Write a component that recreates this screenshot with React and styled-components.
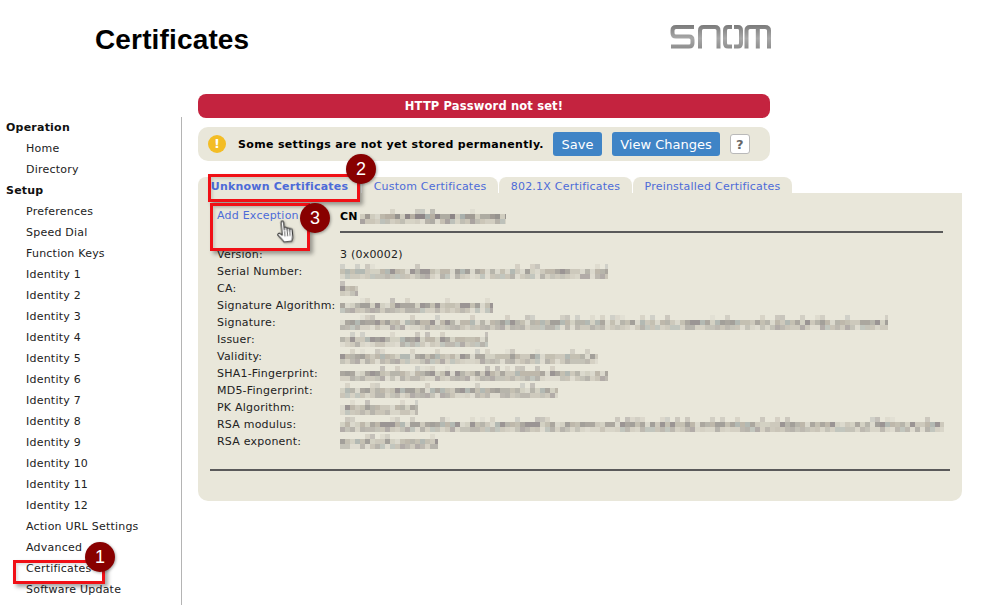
import { createGlobalStyle, styled } from "styled-components";

const GlobalStyle = createGlobalStyle`
  html, body {
    margin: 0;
    padding: 0;
    background: #fff;
  }
  body {
    font-family: "DejaVu Sans", Verdana, sans-serif;
    font-size: 11px;
    letter-spacing: 0.22px;
    color: #222;
  }
`;

const setupItems = [
  "Preferences",
  "Speed Dial",
  "Function Keys",
  "Identity 1",
  "Identity 2",
  "Identity 3",
  "Identity 4",
  "Identity 5",
  "Identity 6",
  "Identity 7",
  "Identity 8",
  "Identity 9",
  "Identity 10",
  "Identity 11",
  "Identity 12",
  "Action URL Settings",
  "Advanced",
  "Certificates",
  "Software Update",
];

const tabs = [
  { label: "Unknown Certificates", width: 163, active: true },
  { label: "Custom Certificates", width: 137 },
  { label: "802.1X Certificates", width: 134 },
  { label: "Preinstalled Certificates", width: 160 },
];

const certRows = [
  { label: "Version:", text: "3 (0x0002)" },
  { label: "Serial Number:", blur: 268 },
  { label: "CA:", blur: 18 },
  { label: "Signature Algorithm:", blur: 153 },
  { label: "Signature:", blur: 548 },
  { label: "Issuer:", blur: 148 },
  { label: "Validity:", blur: 258 },
  { label: "SHA1-Fingerprint:", blur: 268 },
  { label: "MD5-Fingerprint:", blur: 218 },
  { label: "PK Algorithm:", blur: 78 },
  { label: "RSA modulus:", blur: 604 },
  { label: "RSA exponent:", blur: 98 },
];

const blurColors = ["#bdb8aa", "#aeaca2", "#cfccbe", "#96938e", "#b6afa2", "#a9b0ac", "#c8c3b6", "#a09b94", "#d8d6ca", "#8d8687"];

// pixelated stand-in for the redacted values
const Mosaic = ({ width, seed = 7, dark = false }) => {
  let n = seed * 7919 + width;
  const next = () => {
    n = (n * 1103515245 + 12345) & 0x7fffffff;
    return (n >> 8) / 0x7fffff;
  };
  const cells = [];
  const cols = Math.ceil(width / 5);
  const rowOpacity = dark ? [0.5, 1, 0.7] : [0.4, 0.85, 0.6];
  for (let c = 0; c < cols; c++) {
    for (let r = 0; r < 3; r++) {
      if (r === 0 && next() > 0.22) continue;
      const color = blurColors[Math.floor(next() * blurColors.length) % blurColors.length];
      const w = c === cols - 1 ? width - c * 5 : 5;
      cells.push(<rect key={`${c}-${r}`} x={c * 5} y={r * 5} width={w} height={5} fill={color} opacity={rowOpacity[r]} />);
    }
  }
  return (
    <MosaicSvg width={width} height={15} viewBox={`0 0 ${width} 15`}>
      {cells}
    </MosaicSvg>
  );
};

const SnomLogo = () => (
  <LogoSvg width="102" height="26" viewBox="0 0 102 26">
    <defs>
      <linearGradient id="snomGrad" gradientUnits="userSpaceOnUse" x1="0" y1="0" x2="0" y2="26">
        <stop offset="0" stopColor="#777" />
        <stop offset="0.55" stopColor="#a8a8a8" />
        <stop offset="1" stopColor="#8a8a8a" />
      </linearGradient>
    </defs>
    <g fill="none" stroke="url(#snomGrad)" strokeWidth="4">
      <path d="M24 3 H6 Q2.5 3 2.5 6.5 V9 Q2.5 12.5 6 12.5 H19 Q22.5 12.5 22.5 16 V19 Q22.5 22.5 19 22.5 H1" />
      <path d="M30 24.5 V6.5 Q30 3 33.5 3 H45 Q48.5 3 48.5 6.5 V24.5" />
      <path d="M62 3 H58 Q55 3 55 6.5 V19 Q55 22.5 58 22.5 H62" />
      <path d="M64 3 H68 Q71 3 71 6.5 V19 Q71 22.5 68 22.5 H64" />
      <path d="M76.5 24.5 V6.5 Q76.5 3 80 3 H95 Q99 3 99 6.5 V24.5" />
      <path d="M87.8 3 V24.5" />
    </g>
  </LogoSvg>
);

const HandCursor = () => (
  <svg width="22" height="26" viewBox="0 0 20 24">
    <path
      d="M5.5 3 C5.5 1 8 1 8 3 V10 V8.5 C8 7 10.4 7 10.4 8.5 V10.5 V9.3 C10.4 7.9 12.7 7.9 12.7 9.3 V11 V10.2 C12.7 9 15 9 15 10.2 V16 C15 18 14.5 19 13.5 21 H6.5 C5.5 19.5 3.5 16.5 1.8 14.5 C0.8 13 2.6 11.5 4 13 L5.5 14.5 Z"
      fill="#fff"
      stroke="#333"
      strokeWidth="1"
      strokeLinejoin="round"
    />
    <path d="M8 11 V16 M10.4 11 V16 M12.7 11 V16" stroke="#555" strokeWidth="0.8" fill="none" />
  </svg>
);

const App = () => (
  <Page>
    <GlobalStyle />
    <Header>
      <Title>Certificates</Title>
      <SnomLogo />
    </Header>
    <Body>
      <Sidebar>
        <NavHeading>Operation</NavHeading>
        <NavItem>Home</NavItem>
        <NavItem>Directory</NavItem>
        <NavHeading>Setup</NavHeading>
        {setupItems.map((item) => (
          <NavItem key={item}>{item}</NavItem>
        ))}
      </Sidebar>
      <Main>
        <AlertBar>HTTP Password not set!</AlertBar>
        <NoticeBar>
          <WarnIcon>!</WarnIcon>
          <NoticeText>Some settings are not yet stored permanently.</NoticeText>
          <BlueButton $width={49}>Save</BlueButton>
          <BlueButton $width={108}>View Changes</BlueButton>
          <HelpButton>?</HelpButton>
        </NoticeBar>
        <TabRow>
          {tabs.map((tab) => (
            <Tab key={tab.label} $active={tab.active} $width={tab.width}>
              {tab.label}
            </Tab>
          ))}
        </TabRow>
        <Panel>
          <CertHead>
            <CertLink>Add Exception</CertLink>
            <CnCell>
              <CnLabel>CN</CnLabel>
              <Mosaic width={146} seed={3} dark />
            </CnCell>
          </CertHead>
          <CertTable>
            {certRows.map((row, i) => (
              <CertRow key={row.label}>
                <CertLabel>{row.label}</CertLabel>
                {row.text ? <span>{row.text}</span> : <Mosaic width={row.blur} seed={i + 11} />}
              </CertRow>
            ))}
          </CertTable>
          <BottomRule />
        </Panel>
      </Main>
    </Body>

    <RedBox $x={13} $y={560} $w={92} $h={24} />
    <RedBox $x={208} $y={174} $w={152} $h={28} />
    <RedBox $x={210} $y={203} $w={100} $h={48} />
    <Badge $x={100} $y={557}>1</Badge>
    <Badge $x={361} $y={169}>2</Badge>
    <Badge $x={315} $y={218}>3</Badge>
    <HandSpot>
      <HandCursor />
    </HandSpot>
  </Page>
);

const Page = styled.div`
  position: relative;
  width: 1001px;
  height: 605px;
  overflow: hidden;
  background: #fff;
`;

const Header = styled.header`
  display: flex;
  align-items: center;
  justify-content: space-between;
  box-sizing: border-box;
  width: 772px;
  height: 94px;
  padding: 0 0 14px 95px;
`;

const Title = styled.h1`
  margin: 0;
  font-family: "Liberation Sans", Arial, sans-serif;
  font-size: 28px;
  font-weight: 700;
  letter-spacing: 0.15px;
  color: #000;
`;

const LogoSvg = styled.svg`
  margin-bottom: 6px;
`;

const Body = styled.div`
  display: flex;
  align-items: flex-start;
`;

const Sidebar = styled.nav`
  box-sizing: border-box;
  flex: none;
  width: 182px;
  height: 488px;
  margin-top: 23px;
  padding-left: 6px;
  border-right: 1px solid #b4b4b4;
`;

const NavHeading = styled.div`
  height: 21px;
  line-height: 21px;
  font-weight: 700;
  color: #111;
`;

const NavItem = styled.div`
  height: 21px;
  line-height: 21px;
  padding-left: 20px;
  color: #222;
`;

const Main = styled.main`
  flex: none;
  width: 764px;
  margin-left: 16px;
`;

const AlertBar = styled.div`
  width: 572px;
  height: 24px;
  line-height: 24px;
  border-radius: 8px;
  background: #c4233f;
  color: #fff;
  font-weight: 700;
  text-align: center;
  font-size: 11.5px;
  letter-spacing: 0.15px;
`;

const NoticeBar = styled.div`
  display: flex;
  align-items: center;
  box-sizing: border-box;
  width: 572px;
  height: 34px;
  margin-top: 9px;
  padding-left: 10px;
  border-radius: 10px;
  background: #e9e7da;
`;

const WarnIcon = styled.div`
  flex: none;
  width: 18px;
  height: 18px;
  line-height: 18px;
  border-radius: 50%;
  background: #f3bd25;
  color: #fff;
  font-weight: 700;
  font-size: 13px;
  text-align: center;
`;

const NoticeText = styled.div`
  width: 315px;
  margin-left: 12px;
  font-weight: 700;
  font-size: 11px;
  letter-spacing: 0.33px;
  color: #000;
`;

const BlueButton = styled.div`
  box-sizing: border-box;
  flex: none;
  width: ${({ $width }) => $width}px;
  height: 24px;
  line-height: 26px;
  margin-right: 10px;
  border-radius: 3px;
  background: #3f84c6;
  color: #fff;
  font-size: 13px;
  letter-spacing: 0;
  text-align: center;
`;

const HelpButton = styled.div`
  box-sizing: border-box;
  flex: none;
  width: 20px;
  height: 20px;
  line-height: 19px;
  border: 1px solid #b9b9b9;
  border-radius: 3px;
  background: #fff;
  color: #666;
  font-weight: 700;
  font-size: 13px;
  text-align: center;
`;

const TabRow = styled.div`
  display: flex;
  margin-top: 16px;
`;

const Tab = styled.div`
  box-sizing: border-box;
  width: ${({ $width }) => $width}px;
  height: 16px;
  line-height: 19px;
  border-left: ${({ $active }) => ($active ? "none" : "1px solid #fff")};
  border-radius: 8px 8px 0 0;
  background: #e9e7da;
  color: #4d6bd8;
  font-weight: ${({ $active }) => ($active ? 700 : 400)};
  text-align: center;
  overflow: hidden;
  white-space: nowrap;
`;

const Panel = styled.section`
  box-sizing: border-box;
  width: 764px;
  height: 308px;
  padding: 12px 12px 0;
  border-radius: 0 0 10px 10px;
  background: #e9e7da;
`;

const CertHead = styled.div`
  display: flex;
  padding-left: 7px;
`;

const CertLink = styled.div`
  flex: none;
  width: 123px;
  line-height: 21px;
  color: #4d6bd8;
`;

const CnCell = styled.div`
  display: flex;
  align-items: center;
  box-sizing: border-box;
  width: 603px;
  height: 28px;
  padding: 1px 0 5px;
  border-bottom: 2px solid #5a5a5a;
`;

const CnLabel = styled.span`
  width: 20px;
  font-weight: 700;
  color: #000;
`;

const MosaicSvg = styled.svg`
  display: block;
  flex: none;
`;

const CertTable = styled.div`
  padding: 13px 0 0 7px;
`;

const CertRow = styled.div`
  display: flex;
  align-items: center;
  height: 17px;
  color: #222;
`;

const CertLabel = styled.span`
  flex: none;
  width: 123px;
  white-space: nowrap;
`;

const BottomRule = styled.div`
  width: 740px;
  height: 2px;
  margin-top: 19px;
  background: #5a5a5a;
`;

const RedBox = styled.div`
  position: absolute;
  box-sizing: border-box;
  left: ${({ $x }) => $x}px;
  top: ${({ $y }) => $y}px;
  width: ${({ $w }) => $w}px;
  height: ${({ $h }) => $h}px;
  border: 3px solid #f01016;
  box-shadow: 3px 3px 4px rgba(0, 0, 0, 0.35), inset 2px 2px 3px rgba(0, 0, 0, 0.12);
`;

const Badge = styled.div`
  position: absolute;
  left: ${({ $x }) => $x - 15}px;
  top: ${({ $y }) => $y - 15}px;
  width: 30px;
  height: 30px;
  line-height: 30px;
  border-radius: 50%;
  background: #880000;
  box-shadow: 1px 1px 3px rgba(0, 0, 0, 0.35);
  color: #fff;
  font-family: "Liberation Sans", Arial, sans-serif;
  font-size: 18px;
  letter-spacing: 0;
  text-align: center;
`;

const HandSpot = styled.div`
  position: absolute;
  left: 276px;
  top: 219px;
  filter: drop-shadow(1px 1px 1px rgba(0, 0, 0, 0.3));
  transform: rotate(-6deg);
`;

export default App;
